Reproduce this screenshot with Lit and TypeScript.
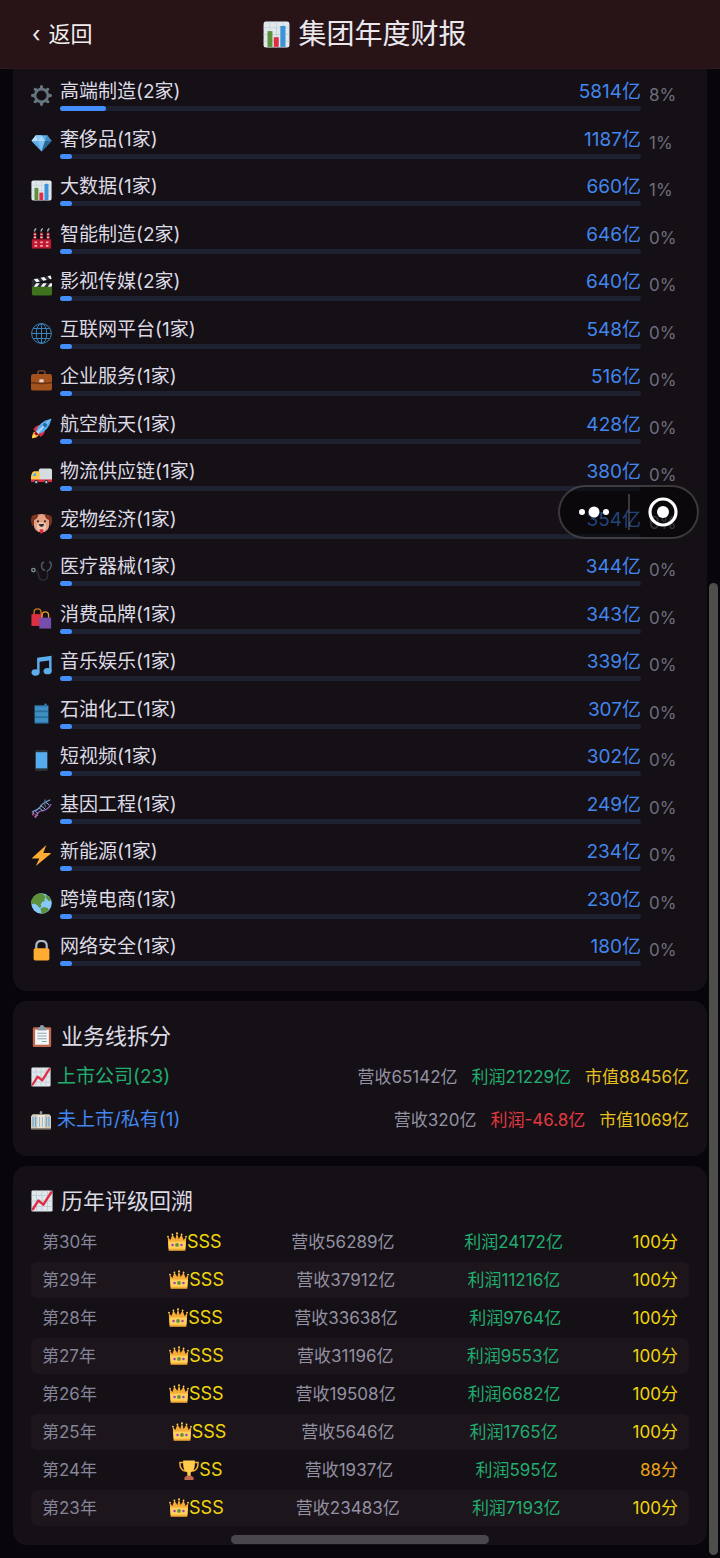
import { LitElement, html, css, svg } from 'lit';
import { customElement, property, state } from 'lit/decorators.js';
import { classMap } from 'lit/directives/class-map.js';
import { styleMap } from 'lit/directives/style-map.js';

interface Sector {
  icon: string;
  name: string;
  count: number;
  revenue: number;
  share: number;
}

interface YearRating {
  year: number;
  icon: string;
  grade: string;
  revenue: number;
  profit: number;
  score: number;
}

const SECTORS: Sector[] = [
  { icon: 'gear', name: '高端制造', count: 2, revenue: 5814, share: 8 },
  { icon: 'gem', name: '奢侈品', count: 1, revenue: 1187, share: 1 },
  { icon: 'bars', name: '大数据', count: 1, revenue: 660, share: 1 },
  { icon: 'factory', name: '智能制造', count: 2, revenue: 646, share: 0 },
  { icon: 'clapper', name: '影视传媒', count: 2, revenue: 640, share: 0 },
  { icon: 'globe', name: '互联网平台', count: 1, revenue: 548, share: 0 },
  { icon: 'briefcase', name: '企业服务', count: 1, revenue: 516, share: 0 },
  { icon: 'rocket', name: '航空航天', count: 1, revenue: 428, share: 0 },
  { icon: 'truck', name: '物流供应链', count: 1, revenue: 380, share: 0 },
  { icon: 'dog', name: '宠物经济', count: 1, revenue: 354, share: 0 },
  { icon: 'stethoscope', name: '医疗器械', count: 1, revenue: 344, share: 0 },
  { icon: 'bags', name: '消费品牌', count: 1, revenue: 343, share: 0 },
  { icon: 'music', name: '音乐娱乐', count: 1, revenue: 339, share: 0 },
  { icon: 'barrel', name: '石油化工', count: 1, revenue: 307, share: 0 },
  { icon: 'phone', name: '短视频', count: 1, revenue: 302, share: 0 },
  { icon: 'dna', name: '基因工程', count: 1, revenue: 249, share: 0 },
  { icon: 'bolt', name: '新能源', count: 1, revenue: 234, share: 0 },
  { icon: 'earth', name: '跨境电商', count: 1, revenue: 230, share: 0 },
  { icon: 'lock', name: '网络安全', count: 1, revenue: 180, share: 0 },
];

const LINES = [
  { icon: 'trend', name: '上市公司', count: 23, revenue: 65142, profit: 21229, value: 88456, listed: true },
  { icon: 'office', name: '未上市/私有', count: 1, revenue: 320, profit: -46.8, value: 1069, listed: false },
];

const HISTORY: YearRating[] = [
  { year: 30, icon: 'crown', grade: 'SSS', revenue: 56289, profit: 24172, score: 100 },
  { year: 29, icon: 'crown', grade: 'SSS', revenue: 37912, profit: 11216, score: 100 },
  { year: 28, icon: 'crown', grade: 'SSS', revenue: 33638, profit: 9764, score: 100 },
  { year: 27, icon: 'crown', grade: 'SSS', revenue: 31196, profit: 9553, score: 100 },
  { year: 26, icon: 'crown', grade: 'SSS', revenue: 19508, profit: 6682, score: 100 },
  { year: 25, icon: 'crown', grade: 'SSS', revenue: 5646, profit: 1765, score: 100 },
  { year: 24, icon: 'trophy', grade: 'SS', revenue: 1937, profit: 595, score: 88 },
  { year: 23, icon: 'crown', grade: 'SSS', revenue: 23483, profit: 7193, score: 100 },
];

// every icon is drawn on a 24x24 grid
const ICONS: Record<string, unknown> = {
  gear: svg`
    <g fill="#65757d">
      ${[0, 45, 90, 135, 180, 225, 270, 315].map(
        (a) => svg`<path d="M9.8 5 10.4.9Q12 -.9 13.6.9L14.2 5Z" transform="rotate(${a} 12 12)"/>`
      )}
    </g>
    <circle cx="12" cy="12" r="7.3" fill="none" stroke="#65757d" stroke-width="3"/>`,
  gem: svg`
    <path d="M5.5 2.5h13L23.500 9 12 21 .5 9Z" fill="#5dadec"/>
    <path d="M5.5 2.5 8 9H.5Z" fill="#bddff6"/>
    <path d="M5.5 2.5H12L8 9Z" fill="#8ccaf7"/>
    <path d="M12 2.5 16 9H8Z" fill="#a9d8f8"/>
    <path d="M18.5 2.5 16 9h7.5Z" fill="#4289c1"/>
    <path d="M8 9h8l-4 12Z" fill="#7cc0f3"/>
    <path d="M16 9h7.5L12 21Z" fill="#2a6797"/>`,
  bars: svg`
    <rect x=".5" y=".5" width="23" height="23" rx="2" fill="#e1e8ed"/>
    <path d="M.5 6h23M.5 12h23M.5 18h23M6 .5v23M12 .5v23M18 .5v23" stroke="#c3ced6" stroke-width=".7"/>
    <rect x="4" y="9" width="4.4" height="14" fill="#5c913b"/>
    <rect x="9.6" y="14.4" width="4.4" height="8.6" fill="#dd2e44"/>
    <rect x="15.4" y="4.4" width="4.6" height="18.6" fill="#3b94d9"/>`,
  factory: svg`
    <path d="M4.5 5v8M12 5v8M19.5 5v8" stroke="#c6253b" stroke-width="2.8"/>
    <path d="M4.500 6.500v5.500M12 6.500v5.500M19.500 6.500v5.500" stroke="#f4c3ca" stroke-width="2.8" stroke-dasharray="1.2 2.4"/>
    <path d="M4 4Q4 2 6 .6M11.5 4Q11.5 2 13.500.6M19 4Q19 2 21 .6" fill="none" stroke="#aeb9c2" stroke-width="1.6"/>
    <rect x="1" y="12.5" width="22" height="11" fill="#be1931"/>
    <path d="M1 13h22" stroke="#7c1225"/>
    <path d="M4 16.500h3M10.500 16.500h3M17 16.500h3M4 20.500h3M10.500 20.500h3M17 20.500h3" stroke="#f4a9b4" stroke-width="2"/>`,
  clapper: svg`
    <path d="M1 10h23v11.5q0 2-2 2H3q-2 0-2-2Z" fill="#3e721d"/>
    <path d="M1 9.5h23v4H1Z" fill="#292f33"/>
    <path d="m3 13.5 3-4h4l-3 4ZM11 13.5l3-4h4l-3 4ZM19 13.5l3-4h2v3l-1 1Z" fill="#f5f8fa"/>
    <path d="m.5 5.5 22-5 1 4-22.200 5Z" fill="#292f33"/>
    <path d="m3.200 4.900 4-1 3 3.500-4 1ZM11 3.100l4-.9 3 3.500-4 .9ZM18.800 1.300l3.700-.8 1 4-1.600.3Z" fill="#f5f8fa"/>`,
  globe: svg`
    <g fill="none" stroke="#3b88c3" stroke-width="1.1">
      <circle cx="12" cy="12" r="11.3"/>
      <ellipse cx="12" cy="12" rx="6" ry="11.3"/>
      <path d="M12 .7v22.600M.7 12h22.600M2.500 6.300h19M2.500 17.700h19"/>
    </g>`,
  briefcase: svg`
    <path d="M8 5V2.500Q8 1 9.500 1h5Q16 1 16 2.500V5" fill="none" stroke="#8a4b38" stroke-width="1.6"/>
    <rect y="4.500" width="24" height="19" rx="2.500" fill="#a3521d"/>
    <path d="M0 13.500q12 2.500 24 0V15q-12 2.500-24 0Z" fill="#66310f"/>
    <rect x="9.500" y="10.500" width="5" height="3.500" rx="1" fill="#ddd6cc"/>`,
  rocket: svg`
    <path d="M1 23q0-6 4-8l4 4q-2 4-8 4Z" fill="#ffac33"/>
    <path d="M1 23q1.500-4 4-5l1.500 1.500Q5 22 1 23Z" fill="#ffe06b"/>
    <path d="M2.500 13.500Q5 8 11 8l-4.500 8ZM10.500 21.500Q16 19 16 13l-8 4.500Z" fill="#dd2e44"/>
    <path d="M5.500 16Q8 4 23.500.5 20 16 8 18.500Z" fill="#55acee"/>
    <path d="M6 15.500 19 4.500 23.500.5 8 18.500Z" fill="#a8d5f5"/>
    <path d="M5.300 15.500 8.500 18.700 6 20 4 18Z" fill="#a0041e"/>
    <circle cx="16" cy="8" r="2.200" fill="#226699"/>`,
  truck: svg`
    <path d="M9 6q0-2 2-2h11q2 0 2 2v12H9Z" fill="#d5dde3"/>
    <path d="M0 13q1-6 4-6h6v11H0Z" fill="#ffcc4d"/>
    <path d="M2 12.500Q3 9 4.500 9H6v3.500Z" fill="#55acee"/>
    <rect y="16.500" width="24" height="3" fill="#dd2e44"/>
    <circle cx="6" cy="19.500" r="2.500" fill="#292f33"/>
    <circle cx="6" cy="19.500" r="1.200" fill="#ccd6dd"/>
    <circle cx="17.500" cy="19.500" r="2.500" fill="#292f33"/>
    <circle cx="17.500" cy="19.500" r="1.200" fill="#ccd6dd"/>`,
  dog: svg`
    <path d="M4 3q8-3.500 16 0l1 10q-1 9-9 9t-9-9Z" fill="#e6a183"/>
    <path d="M8.500 2q-1 5-5 6Q3 12 2 15-1.500 9 1 3.500 4 1 8.500 2ZM15.500 2q1 5 5 6Q21 12 22 15q3.500-6 1-11.500Q20 1 15.500 2Z" fill="#7d3421"/>
    <ellipse cx="12" cy="15.500" rx="5.500" ry="5" fill="#f0c4ae"/>
    <circle cx="8" cy="9.500" r="1.300" fill="#292f33"/>
    <circle cx="16" cy="9.500" r="1.300" fill="#292f33"/>
    <path d="M9 12.500h6q0 3-3 3.500-3-.5-3-3.500Z" fill="#292f33"/>
    <path d="M10 18.500h4V21q0 2.500-2 2.500T10 21Z" fill="#dd2e44"/>`,
  stethoscope: svg`
    <path d="M4 12q4 0 4.500 5 .5 6 5.500 6t5-6q0-3-.5-5" fill="none" stroke="#292f33" stroke-width="1.600"/>
    <path d="M15 2.500q-3 0-3 4 .5 5 4 5.500M20.500 2q3.500 1 2.500 5-1.500 5-5 5.500" fill="none" stroke="#4e5960" stroke-width="1.700"/>
    <circle cx="2.700" cy="11.500" r="1.900" fill="none" stroke="#7a8a94" stroke-width="1.600"/>`,
  bags: svg`
    <path d="M3.500 8V5q0-4 4-4t4 4v3" fill="none" stroke="#c87a1d" stroke-width="1.500"/>
    <path d="M.5 7h13v13.500H.5Z" fill="#dd2e44"/>
    <path d="M12.500 11V8.500q0-4 3.800-4t3.800 4V11" fill="none" stroke="#e69a2c" stroke-width="1.500"/>
    <path d="M9.500 11H23v12.500H9.500Z" fill="#744eaa"/>`,
  music: svg`
    <path d="M7 3 23.500.8v17.700h-2.800V6.200L9.800 7.600V20H7Z" fill="#5dadec"/>
    <ellipse cx="5.200" cy="20" rx="4.600" ry="3.600" fill="#5dadec"/>
    <ellipse cx="19" cy="18.500" rx="4.600" ry="3.600" fill="#5dadec"/>`,
  barrel: svg`
    <path d="M4 2.500h16v21H4Z" fill="#2b6f9f"/>
    <path d="M4.500 4h15v4.500h-15ZM4.500 10.500h15V15h-15ZM4.500 17h15v5h-15Z" fill="#3f8fc5"/>
    <path d="M15.500.7h2.200v2h-2.200Z" fill="#3f8fc5"/>`,
  phone: svg`
    <rect x="4.500" width="15" height="24" rx="2" fill="#292f33"/>
    <rect x="5.500" y="2.500" width="13" height="18.500" fill="#55acee"/>`,
  dna: svg`
    <path d="M1 16Q9 13 11 9.500T22 2" fill="none" stroke="#6d9fd6" stroke-width="1.500"/>
    <path d="M5 23q2-8 8-8.500T23 7" fill="none" stroke="#8b62b8" stroke-width="1.500"/>
    <path d="M16 1.500Q15 8 17 10.500M1 17.500q5 1 7 3" fill="none" stroke="#5d6f93" stroke-width="1.300"/>
    <path d="m9 11 5 4M11 8.500l5 4M17 5l4 3M5 15l3 3" stroke="#a9b8d8" stroke-width="1.100"/>
    <path d="m3 16-1 4M4 21.500l4-2" stroke="#d15fa5" stroke-width="1.300"/>`,
  bolt: svg`<path d="M17.500 0 1.500 14.500q-.7 1 .5 1h7.500L5.500 24l17-14q.7-1-.5-1h-8Z" fill="#ffac33"/>`,
  earth: svg`
    <circle cx="12" cy="12" r="11.700" fill="#88c9f9"/>
    <path d="M2 6Q5 .5 11 .4l4 1.600 2 3-2 2 1 2-3 1-2 3 1 2-2 2-3-3-3-2-4 1Q-.5 9 2 6Z" fill="#5c913b"/>
    <path d="M17 1.500q4 2 6 7l-3 .5-2.500-3Z" fill="#5c913b"/>
    <path d="m11 17.500 4-1.500 4 1 1.500 2Q16 24 12 23.500l-.5-2.500Z" fill="#5c913b"/>`,
  lock: svg`
    <path d="M6 11V7q0-6 6-6t6 6v4" fill="none" stroke="#aab8c2" stroke-width="2.500"/>
    <rect x="3" y="9.500" width="18" height="14" rx="2" fill="#ffac33"/>`,
  clipboard: svg`
    <rect x="2" y="2.500" width="20" height="21.500" rx="1.500" fill="#c1694f"/>
    <path d="M4.500 5h15v16.500h-15Z" fill="#f5f8fa"/>
    <path d="M7 4.500q0-2 2.500-2Q9.500 0 12 0t2.500 2.500q2.500 0 2.500 2V6H7Z" fill="#8c9ba5"/>
    <path d="M7 9h10M7 12h10M7 15h10M12 18h5" stroke="#8fa1ad" stroke-width="1.100"/>`,
  trend: svg`
    <rect x=".5" y=".5" width="23" height="23" rx="1.500" fill="#e1e8ed"/>
    <path d="M.5 6h23M.5 12h23M.5 18h23M6 .5v23M12 .5v23M18 .5v23" stroke="#bac7d0" stroke-width=".8"/>
    <path d="M2 21 8 11.500l5.500 4.500L22 2.500" fill="none" stroke="#dd2e44" stroke-width="2.700" stroke-linecap="round" stroke-linejoin="round"/>`,
  office: svg`
    <path d="m0 7.500 2-2.500h7v17.500H0ZM15 5h7l2 2.500v15h-9Z" fill="#d8cdbd"/>
    <path d="M8 5.500h8v17H8Z" fill="#efe6d6"/>
    <path d="M10.500 2 12 1l1.500 1v4h-3Z" fill="#8a949b"/>
    <path d="M2.500 8v12M5.500 8v12M18.500 8v12M21.500 8v12" stroke="#68a9d4" stroke-width="1.500"/>
    <path d="M10.300 8.500v12M13.700 8.500v12" stroke="#82bce0" stroke-width="1.300"/>
    <path d="M0 21.500h24v2H0Z" fill="#8f8577"/>`,
  crown: svg`
    <path d="M2 22.500.8 5.500l3.200 4L6.500 3 10 8.500 12 1l2 7.500L17.500 3 20 9.500l3.200-4L22 22.500Z" fill="#f5ab35"/>
    <path d="M1.400 11.500h21.200L22 20H2Z" fill="#ffd05c"/>
    <circle cx="1.200" cy="5.500" r="1.100" fill="#ffcc4d"/>
    <circle cx="6.500" cy="3" r="1.100" fill="#ffcc4d"/>
    <circle cx="12" cy="1.400" r="1.200" fill="#ffcc4d"/>
    <circle cx="17.500" cy="3" r="1.100" fill="#ffcc4d"/>
    <circle cx="22.800" cy="5.500" r="1.100" fill="#ffcc4d"/>
    <circle cx="12" cy="15.500" r="2.200" fill="#5c913b"/>
    <circle cx="6.700" cy="15.500" r="1.500" fill="#a23fc0"/>
    <circle cx="17.300" cy="15.500" r="1.500" fill="#a23fc0"/>`,
  trophy: svg`
    <path d="M5.500 3H1.200Q.5 11.500 8 13.500M18.500 3h4.300q.7 8.500-6.800 10.500" fill="none" stroke="#ffac33" stroke-width="1.800"/>
    <path d="M5 .5h14v5q0 7.500-5 9.500v5h-4v-5Q5 13 5 5.500Z" fill="#ffcc4d"/>
    <path d="M6.500 21q1.500-2.500 5.500-2.500t5.500 2.500v3h-11Z" fill="#c1694f"/>`,
};

@customElement('emoji-icon')
class EmojiIcon extends LitElement {
  static styles = css`
    :host {
      display: inline-block;
      flex: none;
      width: 20px;
      height: 20px;
    }

    svg {
      display: block;
      width: 100%;
      height: 100%;
    }
  `;

  @property() name = '';

  render() {
    return html`<svg viewBox="0 0 24 24" aria-hidden="true">${ICONS[this.name]}</svg>`;
  }
}

@customElement('app-root')
class AppRoot extends LitElement {
  static styles = css`
    :host {
      display: block;
      position: relative;
      min-height: 100vh;
      box-sizing: border-box;
      background: #08060b;
      color: #dcdae4;
      font-family: Inter, 'Noto Sans CJK SC', sans-serif;
      font-size: 19px;
      line-height: 24px;
    }

    * {
      box-sizing: border-box;
    }

    button {
      padding: 0;
      border: 0;
      background: none;
      color: inherit;
      font: inherit;
    }

    h1,
    h2 {
      display: flex;
      align-items: center;
      gap: 8px;
      margin: 0;
      font-weight: 400;
    }

    ul {
      margin: 0;
      padding: 0;
      list-style: none;
    }

    .topbar {
      position: sticky;
      top: 0;
      z-index: 1;
      display: grid;
      grid-template-columns: 1fr auto 1fr;
      align-items: center;
      height: 69px;
      padding: 0 22px 0 32px;
      background: #281417;
      border-bottom: 1px solid #2d1a1f;
    }

    .back {
      display: flex;
      justify-self: start;
      gap: 8px;
      color: #f1eeee;
      font-size: 22px;
      line-height: 32px;
    }

    h1 {
      color: #eae7ee;
      font-size: 28px;
      line-height: 40px;
    }

    h1 emoji-icon {
      width: 27px;
      height: 27px;
    }

    .page {
      display: flex;
      flex-direction: column;
      gap: 10px;
      padding: 0 13px 13px;
    }

    .card {
      padding: 19px 18px;
      border-radius: 14px;
      background: #151015;
    }

    h2 {
      font-size: 22px;
      line-height: 32px;
    }

    h2 emoji-icon {
      width: 22px;
      height: 22px;
    }

    .sectors {
      padding: 10px 18px 25px;
      border-radius: 0 0 14px 14px;
    }

    .sector {
      display: flex;
      align-items: center;
      gap: 8px;
      margin-bottom: 16px;
    }

    .sector:nth-child(even) {
      margin-bottom: 15px;
    }

    .sector:last-child {
      margin-bottom: 0;
    }

    .sector emoji-icon {
      width: 21px;
      height: 21px;
    }

    .sector-main {
      flex: 1;
    }

    .sector-head {
      display: flex;
      justify-content: space-between;
      padding: 1px 0 2px;
    }

    .amount {
      color: #4286ee;
    }

    .track {
      height: 5px;
      border-radius: 3px;
      background: #1e2230;
    }

    .fill {
      min-width: 12px;
      height: 5px;
      border-radius: 3px;
      background: #448dfd;
    }

    .share {
      width: 40px;
      color: #6f6c7c;
      font-size: 17px;
    }

    .lines {
      padding-bottom: 15px;
    }

    .lines ul {
      margin-top: 3px;
    }

    .line {
      display: flex;
      align-items: center;
      justify-content: space-between;
      min-height: 43px;
    }

    .line-name {
      display: flex;
      align-items: center;
      gap: 6px;
      color: #4286ee;
    }

    .line-name.listed {
      color: #20ad6f;
    }

    .figures {
      display: flex;
      gap: 14px;
      font-size: 17px;
    }

    .revenue {
      color: #9391a3;
    }

    .profit {
      color: #20ad6f;
    }

    .profit.loss {
      color: #e03a40;
    }

    .gold {
      color: #e6c01e;
    }

    table,
    tbody {
      display: flex;
      flex-direction: column;
      gap: 2px;
    }

    table {
      margin-top: 7px;
      font-size: 17px;
    }

    tr {
      display: flex;
      align-items: center;
      justify-content: space-between;
      height: 36px;
      padding: 0 11px;
      border-radius: 6px;
    }

    tr:nth-child(even) {
      background: #1c151b;
    }

    th,
    td {
      padding: 0;
      font-weight: 400;
    }

    .year {
      color: #85859a;
    }

    .grade {
      display: flex;
      align-items: center;
      color: #f0d60c;
      font-size: 18px;
    }

    .score {
      color: #f0d60c;
    }

    .score.fair {
      color: #eba31a;
    }

    .capsule {
      position: fixed;
      top: 485px;
      right: 21px;
      z-index: 2;
      display: flex;
      align-items: center;
      width: 141px;
      height: 54px;
      border: 2px solid rgba(255, 255, 255, 0.2);
      border-radius: 27px;
      background: rgba(0, 0, 0, 0.5);
    }

    .capsule button {
      display: flex;
      flex: 1;
      align-items: center;
      justify-content: center;
      height: 100%;
    }

    .divider {
      width: 2px;
      height: 36px;
      background: rgba(255, 255, 255, 0.2);
    }

    .scroll-thumb {
      position: absolute;
      top: 583px;
      right: 2px;
      bottom: 3px;
      width: 9px;
      border-radius: 5px;
      background: #4e4e4d;
    }

    .home-bar {
      position: fixed;
      bottom: 14px;
      left: 50%;
      width: 258px;
      height: 9px;
      margin-left: -129px;
      border-radius: 5px;
      background: #49474b;
    }
  `;

  @state() private sectors = SECTORS;

  @state() private history = HISTORY;

  private goBack() {
    window.history.back();
  }

  private renderSector(item: Sector) {
    return html`
      <li class="sector">
        <emoji-icon name=${item.icon}></emoji-icon>
        <div class="sector-main">
          <div class="sector-head">
            <span>${item.name}(${item.count}家)</span>
            <span class="amount">${item.revenue}亿</span>
          </div>
          <div class="track">
            <div class="fill" style=${styleMap({ width: `${item.share}%` })}></div>
          </div>
        </div>
        <span class="share">${item.share}%</span>
      </li>
    `;
  }

  private renderLine(line: (typeof LINES)[number]) {
    return html`
      <li class="line">
        <span class=${classMap({ 'line-name': true, listed: line.listed })}>
          <emoji-icon name=${line.icon}></emoji-icon>${line.name}(${line.count})
        </span>
        <div class="figures">
          <span class="revenue">营收${line.revenue}亿</span>
          <span class=${classMap({ profit: true, loss: line.profit < 0 })}>利润${line.profit}亿</span>
          <span class="gold">市值${line.value}亿</span>
        </div>
      </li>
    `;
  }

  private renderYear(row: YearRating) {
    return html`
      <tr>
        <th class="year" scope="row">第${row.year}年</th>
        <td class="grade"><emoji-icon name=${row.icon}></emoji-icon>${row.grade}</td>
        <td class="revenue">营收${row.revenue}亿</td>
        <td class="profit">利润${row.profit}亿</td>
        <td class=${classMap({ score: true, fair: row.score < 90 })}>${row.score}分</td>
      </tr>
    `;
  }

  render() {
    return html`
      <header class="topbar">
        <button class="back" @click=${this.goBack}><span>‹</span><span>返回</span></button>
        <h1><emoji-icon name="bars"></emoji-icon>集团年度财报</h1>
      </header>

      <main class="page">
        <section class="card sectors">
          <ul>
            ${this.sectors.map((item) => this.renderSector(item))}
          </ul>
        </section>

        <section class="card lines">
          <h2><emoji-icon name="clipboard"></emoji-icon>业务线拆分</h2>
          <ul>
            ${LINES.map((line) => this.renderLine(line))}
          </ul>
        </section>

        <section class="card">
          <h2><emoji-icon name="trend"></emoji-icon>历年评级回溯</h2>
          <table>
            <tbody>
              ${this.history.map((row) => this.renderYear(row))}
            </tbody>
          </table>
        </section>
      </main>

      <div class="capsule">
        <button aria-label="更多">
          <svg width="32" height="14" viewBox="0 0 32 14" fill="#fff">
            <circle cx="4" cy="7" r="3" />
            <circle cx="16" cy="7" r="5.500" />
            <circle cx="28" cy="7" r="3" />
          </svg>
        </button>
        <span class="divider"></span>
        <button aria-label="关闭">
          <svg width="30" height="30" viewBox="0 0 30 30">
            <circle cx="15" cy="15" r="13" fill="none" stroke="#fff" stroke-width="3.200" />
            <circle cx="15" cy="15" r="6" fill="#fff" />
          </svg>
        </button>
      </div>

      <div class="scroll-thumb"></div>
      <div class="home-bar"></div>
    `;
  }
}
